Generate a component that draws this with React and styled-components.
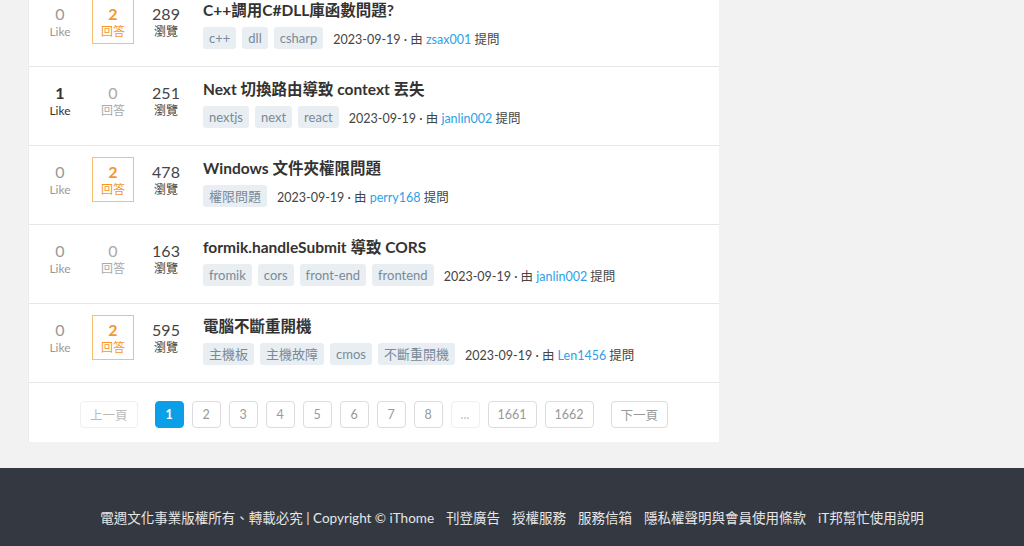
import React from "react";
import styled, { createGlobalStyle } from "styled-components";

const GlobalStyle = createGlobalStyle`
  body {
    margin: 0;
    background: #f2f2f2;
    font-family: Lato, "Noto Sans CJK TC", sans-serif;
    color: #333;
  }
`;

// page is shown scrolled a little past the top of the list
const Main = styled.main`
  margin-top: -12px;
  padding: 0 28px;
`;

const Panel = styled.section`
  width: 690px;
  background: #fff;
  border-left: 1px solid #ececec;
`;

const Row = styled.div`
  display: flex;
  align-items: flex-start;
  height: 79px;
  box-sizing: border-box;
  padding: 11px 0 0 10px;
  border-bottom: 1px solid #e6e6e6;
`;

const Stats = styled.div`
  display: flex;
  gap: 11px;
  margin-right: 16px;
`;

const Stat = styled.div`
  width: 42px;
  height: 45px;
  box-sizing: border-box;
  padding-top: 5px;
  display: flex;
  flex-direction: column;
  align-items: center;
  border: 1px solid ${(p) => (p.$hot ? "#f9bf6f" : "transparent")};
  color: ${(p) => p.$color};
`;

const StatNum = styled.div`
  font-size: 16px;
  line-height: 18px;
  font-weight: ${(p) => (p.$bold ? 700 : 400)};
`;

const StatLabel = styled.div`
  font-size: 12px;
  line-height: 18px;
`;

const Body = styled.div`
  display: flex;
  flex-direction: column;
`;

const Title = styled.a`
  font-size: 15.5px;
  font-weight: 700;
  line-height: 22px;
  color: #333;
  text-decoration: none;
`;

const MetaLine = styled.div`
  display: flex;
  align-items: center;
  gap: 6px;
  margin-top: 6px;
`;

const Tag = styled.span`
  display: inline-block;
  height: 22px;
  line-height: 22px;
  padding: 0 6px;
  border-radius: 3px;
  background: #e8eef2;
  color: #7a8a99;
  font-size: 13px;
`;

const Meta = styled.span`
  margin-left: 4px;
  font-size: 12.5px;
  color: #444;
`;

const User = styled.a`
  color: #2e9fe6;
  text-decoration: none;
`;

const Pager = styled.nav`
  display: flex;
  justify-content: center;
  gap: 8px;
  padding: 18px 0 14px;
`;

const PageBtn = styled.a`
  min-width: 29px;
  height: 27px;
  box-sizing: border-box;
  padding: 0 ${(p) => p.$pad || 0}px;
  display: flex;
  align-items: center;
  justify-content: center;
  border: 1px solid ${(p) => (p.$active ? "#0a9fe6" : p.$muted ? "#efefef" : "#dcdcdc")};
  border-radius: 4px;
  background: ${(p) => (p.$active ? "#0a9fe6" : "#fff")};
  color: ${(p) => (p.$active ? "#fff" : p.$muted ? "#bbb" : "#999")};
  font-size: 12.5px;
  font-weight: ${(p) => (p.$active ? 700 : 400)};
  margin: 0 ${(p) => (p.$edge ? "9px" : "0")};
`;

const Footer = styled.footer`
  margin-top: 26px;
  background: #343941;
  padding: 39px 0 20px;
  display: flex;
  justify-content: center;
  gap: 12px;
  font-size: 13.5px;
  color: #e6e6e6;
`;

const FooterLink = styled.a`
  color: #e6e6e6;
  text-decoration: none;
`;

const questions = [
  { like: 0, ans: 2, view: 289, title: "C++調用C#DLL庫函數問題?", tags: ["c++", "dll", "csharp"], user: "zsax001" },
  { like: 1, ans: 0, view: 251, title: "Next 切換路由導致 context 丟失", tags: ["nextjs", "next", "react"], user: "janlin002" },
  { like: 0, ans: 2, view: 478, title: "Windows 文件夾權限問題", tags: ["權限問題"], user: "perry168" },
  { like: 0, ans: 0, view: 163, title: "formik.handleSubmit 導致 CORS", tags: ["fromik", "cors", "front-end", "frontend"], user: "janlin002" },
  { like: 0, ans: 2, view: 595, title: "電腦不斷重開機", tags: ["主機板", "主機故障", "cmos", "不斷重開機"], user: "Len1456" },
];

const pages = ["1", "2", "3", "4", "5", "6", "7", "8", "...", "1661", "1662"];

function QuestionRow({ q }) {
  return (
    <Row>
      <Stats>
        <Stat $color={q.like ? "#333" : "#999"}>
          <StatNum $bold={q.like > 0}>{q.like}</StatNum>
          <StatLabel>Like</StatLabel>
        </Stat>
        <Stat $hot={q.ans > 0} $color={q.ans ? "#f7962b" : "#aaa"}>
          <StatNum $bold={q.ans > 0}>{q.ans}</StatNum>
          <StatLabel>回答</StatLabel>
        </Stat>
        <Stat $color="#444">
          <StatNum>{q.view}</StatNum>
          <StatLabel>瀏覽</StatLabel>
        </Stat>
      </Stats>
      <Body>
        <Title href="#">{q.title}</Title>
        <MetaLine>
          {q.tags.map((t) => (
            <Tag key={t}>{t}</Tag>
          ))}
          <Meta>
            2023-09-19 · 由 <User href="#">{q.user}</User> 提問
          </Meta>
        </MetaLine>
      </Body>
    </Row>
  );
}

export default function App() {
  return (
    <>
      <GlobalStyle />
      <Main>
        <Panel>
          {questions.map((q) => (
            <QuestionRow key={q.title} q={q} />
          ))}
          <Pager>
            <PageBtn $pad={9} $muted $edge>上一頁</PageBtn>
            {pages.map((p) => (
              <PageBtn key={p} $active={p === "1"} $muted={p === "..."} $pad={p.length > 2 ? 9 : 0}>
                {p}
              </PageBtn>
            ))}
            <PageBtn $pad={9} $edge>下一頁</PageBtn>
          </Pager>
        </Panel>
      </Main>
      <Footer>
        <span>電週文化事業版權所有、轉載必究 | Copyright © iThome</span>
        <FooterLink href="#">刊登廣告</FooterLink>
        <FooterLink href="#">授權服務</FooterLink>
        <FooterLink href="#">服務信箱</FooterLink>
        <FooterLink href="#">隱私權聲明與會員使用條款</FooterLink>
        <FooterLink href="#">iT邦幫忙使用說明</FooterLink>
      </Footer>
    </>
  );
}
